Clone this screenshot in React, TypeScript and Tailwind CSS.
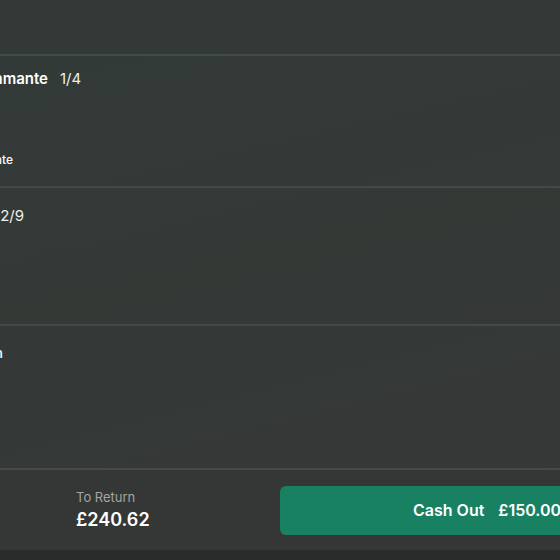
import React from 'react'

const font = { fontFamily: 'Inter, "Liberation Sans", sans-serif' }

// right edge of a clipped label sits at `edge` px from the left of the viewport
function Clipped({ text, edge, className }: { text: string; edge: string; className: string }) {
  return (
    <div className={`flex shrink-0 justify-end ${edge}`}>
      <span className={`shrink-0 whitespace-nowrap ${className}`}>{text}</span>
    </div>
  )
}

export default function App() {
  return (
    <div className="flex h-[560px] w-[560px] flex-col overflow-hidden bg-[#333937] text-white" style={font}>
      <div className="h-[56px] shrink-0 border-b-2 border-[#434947]" />

      <div className="flex h-[132px] shrink-0 flex-col border-b-2 border-[#434947] bg-gradient-to-br from-[#323a37] to-[#353937]">
        <div className="mt-[12px] flex items-center gap-3">
          <Clipped text="Quinto Diamante" edge="w-[48px]" className="text-[15px] font-semibold" />
          <span className="text-[15px] text-[#eeeeee]">1/4</span>
        </div>
        <div className="mt-auto mb-[17px] flex">
          <Clipped text="Dentro del Diamante" edge="w-[13px]" className="text-[12px] font-medium" />
        </div>
      </div>

      <div className="flex h-[138px] shrink-0 flex-col border-b-2 border-[#434947] bg-gradient-to-br from-[#333a37] to-[#353836]">
        <div className="mt-[17px] flex items-center">
          <Clipped text="Lanzamiento 2/9" edge="w-[24px]" className="text-[15px] text-[#eeeeee]" />
        </div>
      </div>

      <div className="flex h-[144px] shrink-0 flex-col border-b-2 border-[#464948] bg-gradient-to-br from-[#333937] to-[#363837]">
        <div className="mt-[16px] flex items-center">
          <Clipped text="Ganador en" edge="w-[3px]" className="text-[14px] font-medium" />
        </div>
      </div>

      <div className="flex h-[80px] shrink-0 items-center bg-[#353736]">
        <div className="ml-[76px] flex w-[204px] shrink-0 flex-col pt-[1px]">
          <span className="text-[13px] leading-4 text-[#a2a5a3]">To Return</span>
          <span className="mt-[3px] text-[18px] font-semibold leading-6">£240.62</span>
        </div>
        <button className="flex h-[49px] w-[320px] shrink-0 items-center rounded-[6px] bg-[#178161] pl-[133px] text-[16px] font-semibold whitespace-nowrap">
          <span>Cash Out</span>
          <span className="ml-[14px]">£150.00</span>
        </button>
      </div>

      <div className="flex-1 bg-[#2a2b2b]" />
    </div>
  )
}
